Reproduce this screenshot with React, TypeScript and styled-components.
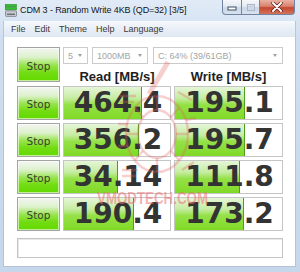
import styled, { createGlobalStyle } from "styled-components";

const GlobalStyle = createGlobalStyle`
  html, body {
    margin: 0;
    padding: 0;
  }
  body {
    width: 300px;
    height: 272px;
    overflow: hidden;
    background: #ffffff;
    font-family: "Liberation Sans", Arial, sans-serif;
  }
`;

const Window = styled.div`
  position: relative;
  width: 300px;
  height: 272px;
  display: flex;
  flex-direction: column;
  background: linear-gradient(#e1ebf7, #cfdef0 40px, #c6d7eb);
  overflow: hidden;
`;

const TitleBar = styled.div`
  height: 21px;
  flex: none;
  display: flex;
  align-items: flex-start;
  padding: 0 5px;
`;

const AppIcon = styled.svg`
  flex: none;
  margin-top: 4px;
`;

const Title = styled.div`
  margin-left: 3px;
  line-height: 20px;
  font-size: 9px;
  letter-spacing: -0.1px;
  color: #141414;
  white-space: nowrap;
`;

const Controls = styled.div`
  margin-left: auto;
  display: flex;
  height: 15px;
`;

type Kind = "min" | "max" | "close";

const CtrlButton = styled.div<{ $kind: Kind }>`
  width: ${(p) => (p.$kind === "close" ? 35 : p.$kind === "min" ? 20 : 18)}px;
  height: 15px;
  box-sizing: border-box;
  border: 1px solid #71839e;
  border-top: none;
  border-left-width: ${(p) => (p.$kind === "min" ? 1 : 0)}px;
  border-bottom-left-radius: ${(p) => (p.$kind === "min" ? 4 : 0)}px;
  border-bottom-right-radius: ${(p) => (p.$kind === "close" ? 4 : 0)}px;
  background: ${(p) =>
    p.$kind === "close"
      ? "linear-gradient(#eab1a2, #d8826e 45%, #c5472f 55%, #d4735b)"
      : "linear-gradient(#f5f8fb, #e3eaf3 45%, #cad7e7 55%, #d8e3f0)"};
  display: flex;
  align-items: center;
  justify-content: center;
`;

const Body = styled.div`
  flex: 1;
  display: flex;
  flex-direction: column;
  padding: 0 4px 5px 3px;
`;

const MenuBar = styled.div`
  height: 16px;
  flex: none;
  display: flex;
  align-items: center;
  gap: 9px;
  padding-left: 7px;
  border-left: 1px solid #b7c6d9;
  border-right: 1px solid #b7c6d9;
  background: linear-gradient(#f6f9fd, #e9eff7 50%, #dfe7f2);
  font-size: 9px;
  color: #3a3a3a;
`;

const MenuItem = styled.span`
  white-space: nowrap;
`;

const Client = styled.div`
  flex: 1;
  display: flex;
  flex-direction: column;
  padding: 10px 0 0 13px;
  background: #ffffff;
  border: 1px solid #b4c3d6;
  border-top: none;
`;

const TopPanel = styled.div`
  display: grid;
  grid-template-columns: 43px 108px 109px;
  grid-template-rows: 17px 18px;
  column-gap: 3px;
`;

const StopButton = styled.div<{ $tall?: boolean }>`
  grid-row: ${(p) => (p.$tall ? "1 / span 2" : "auto")};
  box-sizing: border-box;
  border: 1px solid #a3a3a3;
  box-shadow: inset 0 0 0 1px rgba(255, 255, 255, 0.6);
  background: linear-gradient(#f4f6f2 0%, #dcf1cb 28%, #98e44e 52%, #72dc12 75%, #63d900 100%);
  display: flex;
  align-items: center;
  justify-content: center;
  padding-top: 2px;
  font-family: "DejaVu Sans", sans-serif;
  font-size: 10.5px;
  color: #38422e;
`;

const Selectors = styled.div`
  grid-column: 2 / span 2;
  display: flex;
  gap: 4px;
`;

const Select = styled.div<{ $width: number }>`
  width: ${(p) => p.$width}px;
  flex: none;
  height: 17px;
  box-sizing: border-box;
  border: 1px solid #cbcbcb;
  background: #ffffff;
  display: flex;
  align-items: center;
  padding: 0 5px 0 4px;
  font-size: 9px;
  color: #a4a4a4;
  white-space: nowrap;
  & + & + & {
    margin-left: 1px;
  }
`;

const Arrow = styled.span`
  margin-left: auto;
  width: 0;
  height: 0;
  border-left: 2.5px solid transparent;
  border-right: 2.5px solid transparent;
  border-top: 3px solid #a0a0a0;
`;

const Header = styled.div`
  padding-top: 6px;
  line-height: 13px;
  font-size: 13px;
  font-weight: bold;
  text-align: center;
  color: #1e1e1e;
  white-space: nowrap;
`;

const ResultGrid = styled.div`
  margin-top: 4px;
  display: grid;
  grid-template-columns: 43px 108px 109px;
  grid-auto-rows: 34px;
  gap: 3px;
`;

const ValueBox = styled.div`
  box-sizing: border-box;
  border: 1px solid #c5c5c5;
  background: #ffffff;
  display: grid;
  overflow: hidden;
`;

const Fill = styled.div`
  grid-area: 1 / 1;
  justify-self: start;
  height: 100%;
  box-sizing: border-box;
  border-right: 1px solid #4d9f23;
  background: linear-gradient(#e6f6d9 0%, #c6eca2 35%, #95e148 55%, #80d926 100%);
`;

const Score = styled.div`
  grid-area: 1 / 1;
  place-self: center;
  padding-left: 2px;
  font-family: "DejaVu Sans", "Liberation Sans", sans-serif;
  font-weight: bold;
  font-size: 28px;
  line-height: 28px;
  color: #333333;
`;

const CommentField = styled.div`
  margin-top: 7px;
  width: 266px;
  height: 20px;
  box-sizing: border-box;
  border: 1px solid #c4c4c4;
  box-shadow: inset 1px 1px 0 #e8e8e8;
  background: #ffffff;
`;

const Watermark = styled.svg`
  position: absolute;
  left: 0;
  top: 0;
  pointer-events: none;
`;

const results: [string, string][] = [
  ["464.4", "195.1"],
  ["356.2", "195.7"],
  ["34.14", "111.8"],
  ["190.4", "173.2"],
];

// CrystalDiskMark meter: log scale, full bar at 10000 MB/s
const meter = (score: string) =>
  Math.max(0, Math.min(100, (Math.log10(parseFloat(score) * 10) / 5) * 100));

const Result = ({ value }: { value: string }) => (
  <ValueBox>
    <Fill style={{ width: `${meter(value)}%` }} />
    <Score>{value}</Score>
  </ValueBox>
);

const ControlIcon = ({ kind }: { kind: Kind }) => {
  if (kind === "min")
    return (
      <svg width="10" height="8" viewBox="0 0 10 8">
        <rect x="1" y="4" width="8" height="3" fill="#ffffff" stroke="#3d4c63" strokeWidth="1" />
      </svg>
    );
  if (kind === "max")
    return (
      <svg width="10" height="9" viewBox="0 0 10 9">
        <rect x="1.5" y="1.5" width="7" height="6" fill="none" stroke="#aab6c6" strokeWidth="1" />
        <rect x="2.5" y="2.5" width="5" height="1.5" fill="#c3ccd8" />
      </svg>
    );
  return (
    <svg width="12" height="10" viewBox="0 0 12 10">
      <path d="M2 1 L10 9 M10 1 L2 9" stroke="#5a2018" strokeWidth="3.4" strokeLinecap="round" />
      <path d="M2 1 L10 9 M10 1 L2 9" stroke="#ffffff" strokeWidth="2" strokeLinecap="round" />
    </svg>
  );
};

export default function App() {
  return (
    <>
      <GlobalStyle />
      <Window>
        <TitleBar>
          <AppIcon width="12" height="13" viewBox="0 0 12 13">
            <rect x="0.5" y="0.5" width="11" height="2.2" fill="#34c234" stroke="#1c8a1c" strokeWidth="0.6" />
            <rect x="0.5" y="3.6" width="11" height="2.2" fill="#34c234" stroke="#1c8a1c" strokeWidth="0.6" />
            <rect x="0.5" y="6.8" width="11" height="5.6" rx="0.8" fill="#c9ccd0" stroke="#6c7078" strokeWidth="0.7" />
            <rect x="2" y="9.6" width="8" height="1.2" fill="#5a5e66" />
          </AppIcon>
          <Title>CDM 3 - Random Write 4KB (QD=32) [3/5]</Title>
          <Controls>
            {(["min", "max", "close"] as Kind[]).map((k) => (
              <CtrlButton key={k} $kind={k}>
                <ControlIcon kind={k} />
              </CtrlButton>
            ))}
          </Controls>
        </TitleBar>
        <Body>
          <MenuBar>
            {["File", "Edit", "Theme", "Help", "Language"].map((m) => (
              <MenuItem key={m}>{m}</MenuItem>
            ))}
          </MenuBar>
          <Client>
            <TopPanel>
              <StopButton $tall>Stop</StopButton>
              <Selectors>
                <Select $width={25}>
                  5<Arrow />
                </Select>
                <Select $width={56}>
                  1000MB<Arrow />
                </Select>
                <Select $width={130}>
                  C: 64% (39/61GB)<Arrow />
                </Select>
              </Selectors>
              <Header>Read [MB/s]</Header>
              <Header>Write [MB/s]</Header>
            </TopPanel>
            <ResultGrid>
              {results.map(([read, write], i) => (
                <Row key={i} read={read} write={write} />
              ))}
            </ResultGrid>
            <CommentField />
          </Client>
        </Body>
        <Watermark width="300" height="272" viewBox="0 0 300 272">
          <g fill="none" stroke="#e25f5f" strokeOpacity="0.3" strokeWidth="2.4">
            <path d="M168 62 L149 94" strokeWidth="5" />
            <ellipse cx="157" cy="134" rx="31" ry="38" />
            <ellipse cx="157" cy="134" rx="19" ry="24" />
            <path d="M157 96 V110 M157 158 V172 M126 134 H138 M176 134 H188 M135 108 L143 117 M179 108 L171 117 M135 160 L143 151 M179 160 L171 151" />
            <path d="M120 96 H136 M120 102 H134 M118 124 H128 M118 146 H128 M122 170 H138 M122 176 H136" />
            <path d="M178 92 L192 100 M182 170 L194 162 M186 120 L196 118" />
          </g>
          <text
            x="97"
            y="204"
            textLength="111"
            lengthAdjust="spacingAndGlyphs"
            fontFamily="Liberation Sans, Arial, sans-serif"
            fontWeight="bold"
            fontSize="17"
            fill="#ec7070"
            fillOpacity="0.55"
          >
            VMODTECH.COM
          </text>
        </Watermark>
      </Window>
    </>
  );
}

function Row({ read, write }: { read: string; write: string }) {
  return (
    <>
      <StopButton>Stop</StopButton>
      <Result value={read} />
      <Result value={write} />
    </>
  );
}
